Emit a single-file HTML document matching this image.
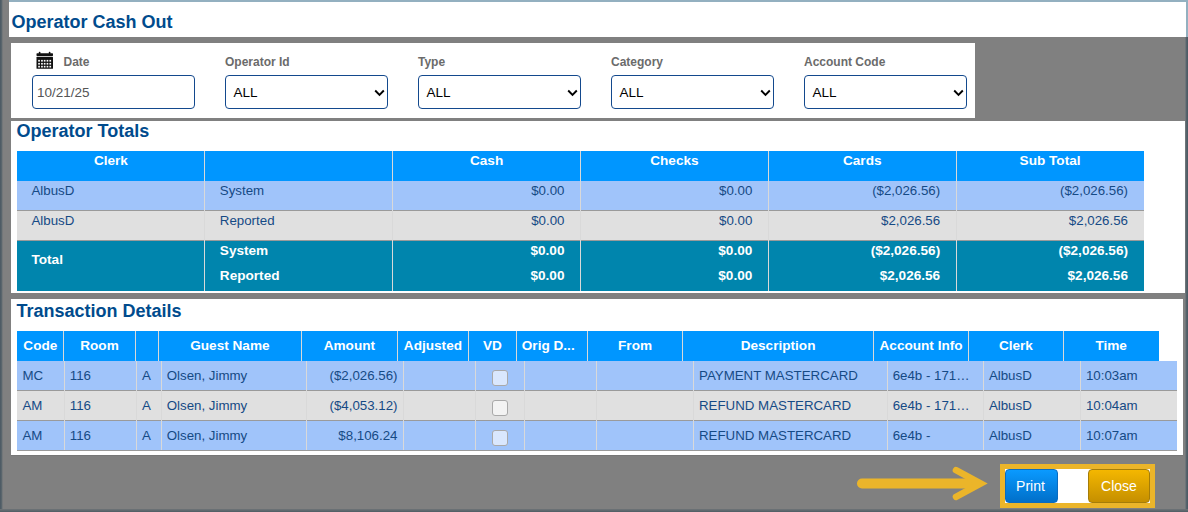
<!DOCTYPE html>
<html>
<head>
<meta charset="utf-8">
<style>
*{box-sizing:border-box;margin:0;padding:0}
html,body{width:1188px;height:512px;overflow:hidden}
body{position:relative;background:#808080;font-family:"Liberation Sans",sans-serif;color:#154a85}
.abs{position:absolute}
.panel{position:absolute;background:#fff}
.title{position:absolute;font-weight:bold;font-size:18px;color:#004b8d;white-space:nowrap;line-height:20px}
.lbl{position:absolute;font-weight:bold;font-size:12px;color:#6b6b6b;white-space:nowrap;line-height:14px;top:55px}
.inp{position:absolute;top:75px;width:163px;height:34px;border:1.5px solid #13498d;border-radius:4px;background:#fff}
.inp span{position:absolute;left:7.5px;top:9px;font-size:13.5px;line-height:16px;color:#000;white-space:nowrap}
.inp svg{position:absolute;right:2.5px;top:12.5px}
.cell{position:absolute;white-space:nowrap;font-size:13.3px;line-height:16px}
.hd{font-weight:bold;color:#fff;text-align:center}
</style>
</head>
<body>
<!-- frame strips -->
<div class="abs" style="left:0;top:0;width:3px;height:512px;background:linear-gradient(to right,#4a5862 0%,#55626a 45%,#808080 100%)"></div>
<div class="abs" style="left:1185px;top:37px;width:3px;height:475px;background:linear-gradient(to right,#7a7e80 0%,#56636b 50%,#4a5862 100%)"></div>
<div class="abs" style="left:0;top:509px;width:1188px;height:3px;background:linear-gradient(to bottom,#6f7477 0%,#4f5c64 100%)"></div>

<!-- title panel -->
<div class="panel" style="left:9px;top:0;width:1179px;height:37px;border-top:2px solid #93b0c0;border-right:2px solid #93b0c0"></div>
<div class="title" style="left:11.5px;top:12px">Operator Cash Out</div>

<!-- filter panel -->
<div class="panel" style="left:11px;top:43px;width:964px;height:75px"></div>
<svg class="abs" style="left:36px;top:51px" width="18" height="19" viewBox="0 0 18 19">
  <rect x="0.5" y="2.3" width="16.5" height="2.6" rx="0.6" fill="#111"/>
  <rect x="2.8" y="0.7" width="1.6" height="2.5" rx="0.7" fill="#111"/>
  <rect x="12.8" y="0.7" width="1.6" height="2.5" rx="0.7" fill="#111"/>
  <rect x="0.5" y="5.8" width="16.5" height="12" rx="0.6" fill="#111"/>
  <g fill="#fff">
    <rect x="2.2" y="8.9" width="1.7" height="1.7"/><rect x="5.1" y="8.9" width="1.7" height="1.7"/><rect x="7.8" y="8.9" width="1.7" height="1.7"/><rect x="10.6" y="8.9" width="1.7" height="1.7"/><rect x="13.4" y="8.9" width="1.7" height="1.7"/>
    <rect x="2.2" y="11.9" width="1.7" height="1.7"/><rect x="5.1" y="11.9" width="1.7" height="1.7"/><rect x="7.8" y="11.9" width="1.7" height="1.7"/><rect x="10.6" y="11.9" width="1.7" height="1.7"/><rect x="13.4" y="11.9" width="1.7" height="1.7"/>
    <rect x="2.2" y="14.8" width="1.7" height="1.7"/><rect x="5.1" y="14.8" width="1.7" height="1.7"/><rect x="7.8" y="14.8" width="1.7" height="1.7"/><rect x="10.6" y="14.8" width="1.7" height="1.7"/><rect x="13.4" y="14.8" width="1.7" height="1.7"/>
  </g>
</svg>
<div class="lbl" style="left:63.5px">Date</div>
<div class="lbl" style="left:225px">Operator Id</div>
<div class="lbl" style="left:418px">Type</div>
<div class="lbl" style="left:611px">Category</div>
<div class="lbl" style="left:804px">Account Code</div>

<div class="inp" style="left:32px"><span style="left:4px;color:#555">10/21/25</span></div>
<div class="inp" style="left:225px"><span>ALL</span><svg width="11" height="8" viewBox="0 0 11 8"><path d="M1.2 1.5 L5.5 5.8 L9.8 1.5" fill="none" stroke="#000" stroke-width="1.9"/></svg></div>
<div class="inp" style="left:418px"><span>ALL</span><svg width="11" height="8" viewBox="0 0 11 8"><path d="M1.2 1.5 L5.5 5.8 L9.8 1.5" fill="none" stroke="#000" stroke-width="1.9"/></svg></div>
<div class="inp" style="left:611px"><span>ALL</span><svg width="11" height="8" viewBox="0 0 11 8"><path d="M1.2 1.5 L5.5 5.8 L9.8 1.5" fill="none" stroke="#000" stroke-width="1.9"/></svg></div>
<div class="inp" style="left:804px"><span>ALL</span><svg width="11" height="8" viewBox="0 0 11 8"><path d="M1.2 1.5 L5.5 5.8 L9.8 1.5" fill="none" stroke="#000" stroke-width="1.9"/></svg></div>

<!-- operator totals panel -->
<div class="panel" style="left:11px;top:121px;width:1174px;height:172px"></div>
<div class="title" style="left:16.5px;top:121px">Operator Totals</div>
<div class="abs" style="left:17.00px;top:151.00px;width:1127.00px;height:30.00px;background:#0096ff;"></div>
<div class="abs" style="left:17.00px;top:181.00px;width:1127.00px;height:29.00px;background:#a0c4fa;"></div>
<div class="abs" style="left:17.00px;top:210.00px;width:1127.00px;height:1.00px;background:#9a9a9a;"></div>
<div class="abs" style="left:17.00px;top:211.00px;width:1127.00px;height:29.00px;background:#e0e0e0;"></div>
<div class="abs" style="left:17.00px;top:240.00px;width:1127.00px;height:1.00px;background:#9a9a9a;"></div>
<div class="abs" style="left:17.00px;top:241.00px;width:1127.00px;height:50.00px;background:#0085ad;"></div>
<div class="abs" style="left:204.33px;top:151.00px;width:1.00px;height:140.00px;background:#d9d9d9;"></div>
<div class="abs" style="left:392.17px;top:151.00px;width:1.00px;height:140.00px;background:#d9d9d9;"></div>
<div class="abs" style="left:580.00px;top:151.00px;width:1.00px;height:140.00px;background:#d9d9d9;"></div>
<div class="abs" style="left:767.83px;top:151.00px;width:1.00px;height:140.00px;background:#d9d9d9;"></div>
<div class="abs" style="left:955.67px;top:151.00px;width:1.00px;height:140.00px;background:#d9d9d9;"></div>
<div class="cell" style="top:153.05px;left:-39.08px;width:300px;text-align:center;color:#fff;font-weight:bold;font-size:13.6px;">Clerk</div>
<div class="cell" style="top:153.05px;left:336.58px;width:300px;text-align:center;color:#fff;font-weight:bold;font-size:13.6px;">Cash</div>
<div class="cell" style="top:153.05px;left:524.42px;width:300px;text-align:center;color:#fff;font-weight:bold;font-size:13.6px;">Checks</div>
<div class="cell" style="top:153.05px;left:712.25px;width:300px;text-align:center;color:#fff;font-weight:bold;font-size:13.6px;">Cards</div>
<div class="cell" style="top:153.05px;left:900.08px;width:300px;text-align:center;color:#fff;font-weight:bold;font-size:13.6px;">Sub Total</div>
<div class="cell" style="top:183.00px;left:31.50px;">AlbusD</div>
<div class="cell" style="top:183.00px;left:219.83px;">System</div>
<div class="cell" style="top:183.00px;left:264.50px;width:300px;text-align:right;">$0.00</div>
<div class="cell" style="top:183.00px;left:452.33px;width:300px;text-align:right;">$0.00</div>
<div class="cell" style="top:183.00px;left:640.17px;width:300px;text-align:right;">($2,026.56)</div>
<div class="cell" style="top:183.00px;left:828.00px;width:300px;text-align:right;">($2,026.56)</div>
<div class="cell" style="top:213.00px;left:31.50px;">AlbusD</div>
<div class="cell" style="top:213.00px;left:219.83px;">Reported</div>
<div class="cell" style="top:213.00px;left:264.50px;width:300px;text-align:right;">$0.00</div>
<div class="cell" style="top:213.00px;left:452.33px;width:300px;text-align:right;">$0.00</div>
<div class="cell" style="top:213.00px;left:640.17px;width:300px;text-align:right;">$2,026.56</div>
<div class="cell" style="top:213.00px;left:828.00px;width:300px;text-align:right;">$2,026.56</div>
<div class="cell" style="top:252.30px;left:31.50px;color:#fff;font-weight:bold;font-size:13.6px;">Total</div>
<div class="cell" style="top:242.50px;left:219.83px;color:#fff;font-weight:bold;font-size:13.6px;">System</div>
<div class="cell" style="top:242.50px;left:264.50px;width:300px;text-align:right;color:#fff;font-weight:bold;font-size:13.6px;">$0.00</div>
<div class="cell" style="top:242.50px;left:452.33px;width:300px;text-align:right;color:#fff;font-weight:bold;font-size:13.6px;">$0.00</div>
<div class="cell" style="top:242.50px;left:640.17px;width:300px;text-align:right;color:#fff;font-weight:bold;font-size:13.6px;">($2,026.56)</div>
<div class="cell" style="top:242.50px;left:828.00px;width:300px;text-align:right;color:#fff;font-weight:bold;font-size:13.6px;">($2,026.56)</div>
<div class="cell" style="top:267.50px;left:219.83px;color:#fff;font-weight:bold;font-size:13.6px;">Reported</div>
<div class="cell" style="top:267.50px;left:264.50px;width:300px;text-align:right;color:#fff;font-weight:bold;font-size:13.6px;">$0.00</div>
<div class="cell" style="top:267.50px;left:452.33px;width:300px;text-align:right;color:#fff;font-weight:bold;font-size:13.6px;">$0.00</div>
<div class="cell" style="top:267.50px;left:640.17px;width:300px;text-align:right;color:#fff;font-weight:bold;font-size:13.6px;">$2,026.56</div>
<div class="cell" style="top:267.50px;left:828.00px;width:300px;text-align:right;color:#fff;font-weight:bold;font-size:13.6px;">$2,026.56</div>


<!-- transaction panel -->
<div class="panel" style="left:11px;top:299px;width:1172px;height:156px"></div>
<div class="title" style="left:16.5px;top:301px">Transaction Details</div>
<div class="abs" style="left:17.00px;top:331.00px;width:1142.00px;height:30.00px;background:#0096ff;"></div>
<div class="abs" style="left:63.10px;top:331.00px;width:1.00px;height:30.00px;background:#d9d9d9;"></div>
<div class="abs" style="left:134.90px;top:331.00px;width:1.00px;height:30.00px;background:#d9d9d9;"></div>
<div class="abs" style="left:157.90px;top:331.00px;width:1.00px;height:30.00px;background:#d9d9d9;"></div>
<div class="abs" style="left:300.90px;top:331.00px;width:1.00px;height:30.00px;background:#d9d9d9;"></div>
<div class="abs" style="left:396.90px;top:331.00px;width:1.00px;height:30.00px;background:#d9d9d9;"></div>
<div class="abs" style="left:468.00px;top:331.00px;width:1.00px;height:30.00px;background:#d9d9d9;"></div>
<div class="abs" style="left:515.80px;top:331.00px;width:1.00px;height:30.00px;background:#d9d9d9;"></div>
<div class="abs" style="left:587.00px;top:331.00px;width:1.00px;height:30.00px;background:#d9d9d9;"></div>
<div class="abs" style="left:682.10px;top:331.00px;width:1.00px;height:30.00px;background:#d9d9d9;"></div>
<div class="abs" style="left:873.00px;top:331.00px;width:1.00px;height:30.00px;background:#d9d9d9;"></div>
<div class="abs" style="left:968.10px;top:331.00px;width:1.00px;height:30.00px;background:#d9d9d9;"></div>
<div class="abs" style="left:1062.80px;top:331.00px;width:1.00px;height:30.00px;background:#d9d9d9;"></div>
<div class="cell" style="top:338.30px;left:-109.70px;width:300px;text-align:center;color:#fff;font-weight:bold;font-size:13.6px;">Code</div>
<div class="cell" style="top:338.30px;left:-50.50px;width:300px;text-align:center;color:#fff;font-weight:bold;font-size:13.6px;">Room</div>
<div class="cell" style="top:338.30px;left:79.90px;width:300px;text-align:center;color:#fff;font-weight:bold;font-size:13.6px;">Guest Name</div>
<div class="cell" style="top:338.30px;left:199.40px;width:300px;text-align:center;color:#fff;font-weight:bold;font-size:13.6px;">Amount</div>
<div class="cell" style="top:338.30px;left:282.95px;width:300px;text-align:center;color:#fff;font-weight:bold;font-size:13.6px;">Adjusted</div>
<div class="cell" style="top:338.30px;left:342.40px;width:300px;text-align:center;color:#fff;font-weight:bold;font-size:13.6px;">VD</div>
<div class="cell" style="top:338.30px;left:521.80px;color:#fff;font-weight:bold;font-size:13.6px;">Orig D...</div>
<div class="cell" style="top:338.30px;left:485.05px;width:300px;text-align:center;color:#fff;font-weight:bold;font-size:13.6px;">From</div>
<div class="cell" style="top:338.30px;left:628.05px;width:300px;text-align:center;color:#fff;font-weight:bold;font-size:13.6px;">Description</div>
<div class="cell" style="top:338.30px;left:771.05px;width:300px;text-align:center;color:#fff;font-weight:bold;font-size:13.6px;">Account Info</div>
<div class="cell" style="top:338.30px;left:865.95px;width:300px;text-align:center;color:#fff;font-weight:bold;font-size:13.6px;">Clerk</div>
<div class="cell" style="top:338.30px;left:961.15px;width:300px;text-align:center;color:#fff;font-weight:bold;font-size:13.6px;">Time</div>
<div class="abs" style="left:17.00px;top:361.00px;width:1160.10px;height:29.00px;background:#a0c4fa;"></div>
<div class="abs" style="left:17.00px;top:390.00px;width:1160.10px;height:1.00px;background:#9a9a9a;"></div>
<div class="abs" style="left:17.00px;top:391.00px;width:1160.10px;height:29.00px;background:#e0e0e0;"></div>
<div class="abs" style="left:17.00px;top:420.00px;width:1160.10px;height:1.00px;background:#9a9a9a;"></div>
<div class="abs" style="left:17.00px;top:421.00px;width:1160.10px;height:29.00px;background:#a0c4fa;"></div>
<div class="abs" style="left:17.00px;top:450.00px;width:1160.10px;height:1.00px;background:#9a9a9a;"></div>
<div class="abs" style="left:63.80px;top:361.00px;width:1.00px;height:89.00px;background:#d9d9d9;"></div>
<div class="abs" style="left:136.00px;top:361.00px;width:1.00px;height:89.00px;background:#d9d9d9;"></div>
<div class="abs" style="left:160.70px;top:361.00px;width:1.00px;height:89.00px;background:#d9d9d9;"></div>
<div class="abs" style="left:305.90px;top:361.00px;width:1.00px;height:89.00px;background:#d9d9d9;"></div>
<div class="abs" style="left:403.00px;top:361.00px;width:1.00px;height:89.00px;background:#d9d9d9;"></div>
<div class="abs" style="left:475.10px;top:361.00px;width:1.00px;height:89.00px;background:#d9d9d9;"></div>
<div class="abs" style="left:523.90px;top:361.00px;width:1.00px;height:89.00px;background:#d9d9d9;"></div>
<div class="abs" style="left:595.90px;top:361.00px;width:1.00px;height:89.00px;background:#d9d9d9;"></div>
<div class="abs" style="left:693.00px;top:361.00px;width:1.00px;height:89.00px;background:#d9d9d9;"></div>
<div class="abs" style="left:886.70px;top:361.00px;width:1.00px;height:89.00px;background:#d9d9d9;"></div>
<div class="abs" style="left:982.90px;top:361.00px;width:1.00px;height:89.00px;background:#d9d9d9;"></div>
<div class="abs" style="left:1079.90px;top:361.00px;width:1.00px;height:89.00px;background:#d9d9d9;"></div>
<div class="cell" style="top:368.00px;left:22.50px;">MC</div>
<div class="cell" style="top:368.00px;left:69.80px;">116</div>
<div class="cell" style="top:368.00px;left:142.00px;">A</div>
<div class="cell" style="top:368.00px;left:166.70px;">Olsen, Jimmy</div>
<div class="cell" style="top:368.00px;left:97.50px;width:300px;text-align:right;">($2,026.56)</div>
<div class="abs" style="left:492.20px;top:370.20px;width:15.50px;height:15.50px;background:rgba(255,255,255,0.6);border:1px solid #a9a9a9;border-radius:3px;"></div>
<div class="cell" style="top:368.00px;left:699.00px;">PAYMENT MASTERCARD</div>
<div class="cell" style="top:368.00px;left:892.70px;">6e4b - 171…</div>
<div class="cell" style="top:368.00px;left:988.90px;">AlbusD</div>
<div class="cell" style="top:368.00px;left:1085.90px;">10:03am</div>
<div class="cell" style="top:398.00px;left:22.50px;">AM</div>
<div class="cell" style="top:398.00px;left:69.80px;">116</div>
<div class="cell" style="top:398.00px;left:142.00px;">A</div>
<div class="cell" style="top:398.00px;left:166.70px;">Olsen, Jimmy</div>
<div class="cell" style="top:398.00px;left:97.50px;width:300px;text-align:right;">($4,053.12)</div>
<div class="abs" style="left:492.20px;top:400.20px;width:15.50px;height:15.50px;background:rgba(255,255,255,0.6);border:1px solid #a9a9a9;border-radius:3px;"></div>
<div class="cell" style="top:398.00px;left:699.00px;">REFUND MASTERCARD</div>
<div class="cell" style="top:398.00px;left:892.70px;">6e4b - 171…</div>
<div class="cell" style="top:398.00px;left:988.90px;">AlbusD</div>
<div class="cell" style="top:398.00px;left:1085.90px;">10:04am</div>
<div class="cell" style="top:428.00px;left:22.50px;">AM</div>
<div class="cell" style="top:428.00px;left:69.80px;">116</div>
<div class="cell" style="top:428.00px;left:142.00px;">A</div>
<div class="cell" style="top:428.00px;left:166.70px;">Olsen, Jimmy</div>
<div class="cell" style="top:428.00px;left:97.50px;width:300px;text-align:right;">$8,106.24</div>
<div class="abs" style="left:492.20px;top:430.20px;width:15.50px;height:15.50px;background:rgba(255,255,255,0.6);border:1px solid #a9a9a9;border-radius:3px;"></div>
<div class="cell" style="top:428.00px;left:699.00px;">REFUND MASTERCARD</div>
<div class="cell" style="top:428.00px;left:892.70px;">6e4b -</div>
<div class="cell" style="top:428.00px;left:988.90px;">AlbusD</div>
<div class="cell" style="top:428.00px;left:1085.90px;">10:07am</div>


<div class="abs" style="left:11px;top:455px;width:1172px;height:1px;background:rgba(0,0,0,0.07)"></div>
<!-- buttons -->
<svg class="abs" style="left:850px;top:460px" width="145" height="48" viewBox="0 0 145 48">
  <path d="M12 23.5 L122 23.5" stroke="#ebb52a" stroke-width="10" stroke-linecap="round"/>
  <path d="M106 10.2 L130.7 23.5 L106 36.8" fill="none" stroke="#ebb52a" stroke-width="6.6" stroke-linecap="round" stroke-linejoin="miter" stroke-miterlimit="10"/>
</svg>
<div class="abs" style="left:1000px;top:464px;width:155px;height:44px;background:#fff;border:5px solid #ebb52a"></div>
<div class="abs" style="left:1005px;top:469px;width:53px;height:34px;border-radius:4px;background:linear-gradient(to bottom,#0a9aff,#006fc9);border:1px solid #0a6bc0"></div>
<div class="cell" style="left:1004px;top:478px;width:53px;text-align:center;font-size:14px;color:#fff;line-height:16px">Print</div>
<div class="abs" style="left:1088px;top:469px;width:62px;height:34px;border-radius:4px;background:linear-gradient(to bottom,#f4b700,#c58f00);border:1px solid #a57d08"></div>
<div class="cell" style="left:1088px;top:478px;width:62px;text-align:center;font-size:14px;color:#fff;line-height:16px">Close</div>
</body>
</html>
